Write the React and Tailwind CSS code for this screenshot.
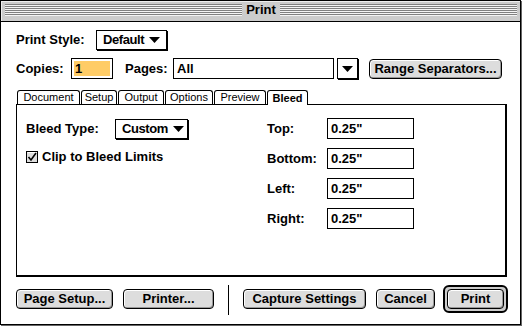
import React from 'react';

// Mac OS 8 "Platinum" print dialog
const Arrow = () => (
  <svg width="11" height="6" viewBox="0 0 11 6" className="shrink-0">
    <path d="M0 0H11L5.5 6Z" fill="#000" />
  </svg>
);

const Button = ({ children, className = '' }) => (
  <div
    className={`h-[20px] rounded-[4px] border border-black bg-[#dddddd] shadow-[inset_1px_1px_0_#ffffff,inset_-1px_-1px_0_#999999] flex items-center justify-center text-[13px] font-bold ${className}`}
  >
    {children}
  </div>
);

const Popup = ({ label, className = '' }) => (
  <div
    className={`h-[20px] border border-black shadow-[1px_1px_0_#000] bg-white flex items-center gap-[5px] pl-[6px] text-[13px] font-bold tracking-[-0.4px] ${className}`}
  >
    <span>{label}</span>
    <Arrow />
  </div>
);

const Field = ({ value, className = '' }) => (
  <div className={`h-[21px] border border-black bg-white flex items-center pl-[3px] text-[13px] font-bold ${className}`}>
    {value}
  </div>
);

const tabs = [
  { name: 'Document', w: 'w-[63px]' },
  { name: 'Setup', w: 'w-[36px]' },
  { name: 'Output', w: 'w-[46px]' },
  { name: 'Options', w: 'w-[48px]' },
  { name: 'Preview', w: 'w-[52px]' },
  { name: 'Bleed', w: 'w-[41px]', active: true },
];

const bleedRows = [
  { label: 'Top:' },
  { label: 'Bottom:' },
  { label: 'Left:' },
  { label: 'Right:' },
];

const Checkbox = () => (
  <svg width="12" height="12" viewBox="0 0 12 12" className="shrink-0">
    <rect x="0.5" y="0.5" width="11" height="11" fill="#dddddd" stroke="#000" />
    <path d="M1.5 1.5H10.5" stroke="#ffffff" />
    <path d="M2.5 6L5 9L10 2" fill="none" stroke="#000" strokeWidth="1.6" />
  </svg>
);

export default function App() {
  return (
    <div className="w-[523px] h-[327px] bg-white overflow-hidden font-['Liberation_Sans',Arial,sans-serif] text-black">
      <div className="w-[521px] h-[325px] border border-black shadow-[1px_1px_0_#666] flex flex-col">
        {/* Title bar */}
        <div className="h-[21px] shrink-0 bg-[#cccccc] border-b border-black shadow-[inset_1px_1px_0_#eeeeee] flex items-start pt-[3px] pl-[4px] pr-[3px]">
          <div className="flex-1 h-[12px] bg-[repeating-linear-gradient(to_bottom,#808080_0px,#808080_1px,#f4f4f4_1px,#f4f4f4_2px)]" />
          <div className="w-[38px] h-[14px] -mt-[1px] bg-[#cccccc] flex items-center justify-center text-[13px] font-bold">
            Print
          </div>
          <div className="flex-1 h-[12px] bg-[repeating-linear-gradient(to_bottom,#808080_0px,#808080_1px,#f4f4f4_1px,#f4f4f4_2px)]" />
        </div>

        {/* Body */}
        <div className="flex flex-col pt-[8px] pl-[15px] text-[13px] font-bold">
          <div className="flex items-center h-[20px]">
            <span className="w-[80px]">Print Style:</span>
            <Popup label="Default" className="w-[71px]" />
          </div>

          <div className="flex items-center h-[21px] mt-[8px]">
            <span className="w-[55px]">Copies:</span>
            <div className="w-[42px] h-[21px] border border-black bg-white p-[2px]">
              <div className="h-full bg-[#ffcc66] flex items-center pl-[1px]">1</div>
            </div>
            <span className="ml-[12px] w-[48px]">Pages:</span>
            <Field value="All" className="w-[161px]" />
            <div className="ml-[3px] w-[21px] h-[21px] border border-black shadow-[1px_1px_0_#000] flex items-center justify-center">
              <Arrow />
            </div>
            <Button className="ml-[11px] w-[133px]">Range Separators...</Button>
          </div>

          {/* Tabs */}
          <div className="mt-[11px] w-[491px]">
            <div className="flex items-end gap-[1px] pl-[1px] h-[14px] relative z-10">
              {tabs.map((t) =>
                t.active ? (
                  <div
                    key={t.name}
                    className={`${t.w} h-[15px] -mb-[1px] bg-white border-l border-t border-r border-black rounded-t-[3px] flex items-center justify-center text-[11px] font-bold`}
                  >
                    {t.name}
                  </div>
                ) : (
                  <div
                    key={t.name}
                    className={`${t.w} h-[14px] bg-white border-l border-t border-r border-black rounded-t-[3px] flex items-center justify-center text-[11px] font-normal`}
                  >
                    {t.name}
                  </div>
                )
              )}
            </div>

            <div className="h-[173px] border-l border-t border-r-2 border-b-2 border-black flex flex-col gap-[9px] pt-[13px] pl-[9px]">
              {bleedRows.map((r, i) => (
                <div key={r.label} className="flex items-center h-[21px]">
                  <div className="w-[241px] flex items-center">
                    {i === 0 && (
                      <>
                        <span className="w-[89px]">Bleed Type:</span>
                        <Popup label="Custom" className="w-[73px]" />
                      </>
                    )}
                    {i === 1 && (
                      <div className="flex items-center gap-[4px] -mt-[4px]">
                        <Checkbox />
                        <span>Clip to Bleed Limits</span>
                      </div>
                    )}
                  </div>
                  <span className="w-[60px]">{r.label}</span>
                  <Field value={'0.25"'} className="w-[87px]" />
                </div>
              ))}
            </div>
          </div>

          {/* Buttons */}
          <div className="flex items-center h-[28px] mt-[8px]">
            <Button className="w-[97px]">Page Setup...</Button>
            <Button className="ml-[10px] w-[91px]">Printer...</Button>
            <div className="ml-[14px] w-px h-[30px] bg-black mt-[2px]" />
            <Button className="ml-[14px] w-[123px]">Capture Settings</Button>
            <Button className="ml-[10px] w-[59px]">Cancel</Button>
            <div className="ml-[8px] w-[65px] h-[28px] border-2 border-black rounded-[6px] bg-[#cccccc] p-[2px]">
              <Button className="w-full">Print</Button>
            </div>
          </div>
        </div>
      </div>
    </div>
  );
}
